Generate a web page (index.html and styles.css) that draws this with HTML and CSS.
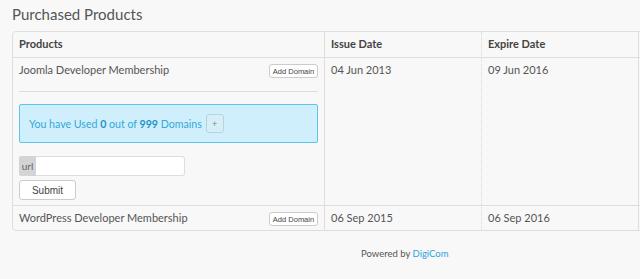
FILE: index.html
```html
<!DOCTYPE html>
<html lang="en">
<head>
  <meta charset="UTF-8">
  <title>Purchased Products</title>
  <link rel="stylesheet" href="styles.css">
</head>
<body>
  <h2 class="page-title">Purchased Products</h2>
  <div class="table-wrap">
    <table class="products">
      <thead>
        <tr>
          <th class="col-product">Products</th>
          <th class="col-date">Issue Date</th>
          <th class="col-date">Expire Date</th>
          <th class="col-extra"></th>
        </tr>
      </thead>
      <tbody>
        <tr>
          <td>
            <div class="product-line">
              <span>Joomla Developer Membership</span>
              <button class="btn-mini">Add Domain</button>
            </div>
            <div class="domains">
              <div class="alert-info">
                <span>You have Used <b>0</b> out of <b>999</b> Domains</span>
                <button class="btn-plus">+</button>
              </div>
              <div class="url-group">
                <span class="url-addon">url</span>
                <input class="url-input" type="text">
              </div>
              <button class="btn-submit">Submit</button>
            </div>
          </td>
          <td>04 Jun 2013</td>
          <td class="dotted">09 Jun 2016</td>
          <td></td>
        </tr>
        <tr>
          <td>
            <div class="product-line">
              <span>WordPress Developer Membership</span>
              <button class="btn-mini">Add Domain</button>
            </div>
          </td>
          <td>06 Sep 2015</td>
          <td class="dotted">06 Sep 2016</td>
          <td></td>
        </tr>
      </tbody>
    </table>
  </div>
  <div class="footer">Powered by <a href="#">DigiCom</a></div>
</body>
</html>
```

FILE: styles.css
```css
html, body {
  overflow: hidden;
}
body {
  margin: 0;
  padding: 0 0 0 12px;
  background: #f8f8f8;
  font-family: Lato, "Open Sans", Arial, sans-serif;
  color: #555;
  height: 279px;
}
.page-title {
  margin: 0;
  padding-top: 4px;
  height: 27px;
  font-size: 15px;
  font-weight: 400;
  color: #555;
  line-height: 20px;
}
.table-wrap {
  width: 628px;
  overflow: hidden;
}
.products {
  border-collapse: separate;
  border-spacing: 0;
  width: 700px;
  border: 1px solid #dedede;
  border-radius: 4px;
  font-size: 11px;
}
.products th {
  text-align: left;
  font-weight: 700;
  color: #444;
  height: 23px;
  padding: 0 6px 2px;
  border-bottom: 1px solid #dedede;
}
.products td {
  vertical-align: top;
  padding: 5px 6px 0;
  border-top: 1px solid #dedede;
  height: 19px;
}
.products tbody tr:first-child td {
  border-top: 0;
}
.products th + th,
.products td + td {
  border-left: 1px solid #dedede;
}
.products th.col-date + th.col-date,
.products td.dotted {
  border-left: 1px dotted #d8d8d8;
}
.col-product { width: 299px; }
.col-date { width: 144px; }
.product-line {
  display: flex;
  justify-content: space-between;
  align-items: flex-start;
  height: 19px;
}
.btn-mini {
  font-family: "Liberation Sans", Arial, sans-serif;
  font-size: 7.5px;
  color: #444;
  background: #fff;
  border: 1px solid #ccc;
  border-radius: 3px;
  height: 14px;
  width: 49px;
  padding: 0;
  margin-top: 1px;
}
.domains {
  border-top: 1px solid #ddd;
  margin-top: 9px;
  padding-top: 12px;
  padding-bottom: 5px;
}
.alert-info {
  background: #d0effc;
  border: 1px solid #5ec4ec;
  border-radius: 2px;
  color: #33a9d8;
  height: 37px;
  display: flex;
  align-items: center;
  padding: 0 9px;
  gap: 4px;
  font-size: 10.6px;
}
.alert-info b {
  color: #1f93c6;
}
.btn-plus {
  width: 18px;
  height: 19px;
  border: 1px solid #b6d4df;
  border-radius: 3px;
  background: #d6eef7;
  color: #888;
  font-size: 9px;
  padding: 0;
}
.url-group {
  display: flex;
  margin-top: 13px;
  width: 166px;
  height: 20px;
}
.url-addon {
  flex: none;
  width: 17px;
  background: #d4d4d4;
  color: #666;
  font-size: 10px;
  line-height: 20px;
  text-align: center;
  border-radius: 2px 0 0 2px;
}
.url-input {
  flex: 1;
  min-width: 0;
  width: 0;
  box-sizing: border-box;
  border: 1px solid #ddd;
  border-left: 0;
  border-radius: 0 3px 3px 0;
  background: #fff;
  padding: 0;
  margin: 0;
}
.btn-submit {
  margin-top: 4px;
  width: 57px;
  height: 20px;
  background: #fff;
  border: 1px solid #ccc;
  border-radius: 3px;
  font-family: "Liberation Sans", Arial, sans-serif;
  font-size: 10px;
  color: #444;
}
.footer {
  margin-top: 17px;
  padding-left: 349px;
  font-size: 9.5px;
  color: #555;
}
.footer a {
  color: #2aa3dc;
  text-decoration: none;
}
```
